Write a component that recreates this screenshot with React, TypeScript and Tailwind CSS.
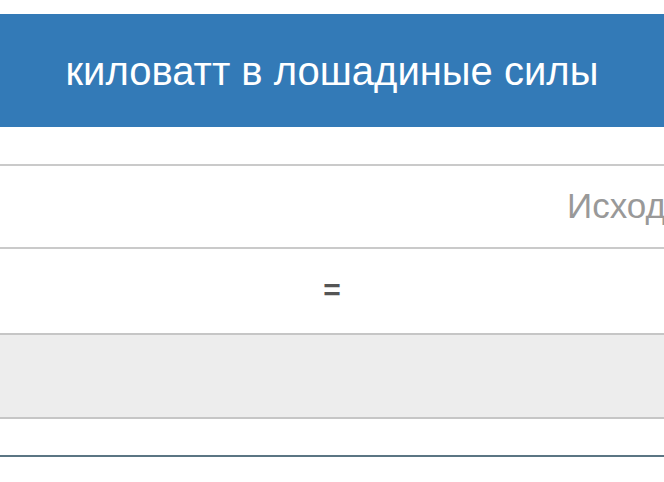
export default function App() {
  return (
    <div className="w-[664px] h-[482px] overflow-hidden bg-white font-['Liberation_Sans',Arial,sans-serif]">
      <div className="h-[14px]" />
      <div className="h-[113px] bg-[#337ab7] flex items-center justify-center">
        <h1 className="text-white text-[40px] leading-none">киловатт в лошадиные силы</h1>
      </div>
      <div className="h-[37px]" />
      <div className="border-t-2 border-[#cacaca] h-[83px] flex items-center overflow-hidden">
        <div className="pl-[567px] text-[35px] text-[#999] whitespace-nowrap">Исходное значение</div>
      </div>
      <div className="border-t-2 border-[#cacaca] h-[86px] flex items-center justify-center">
        <span className="text-[30px] font-bold text-[#555] leading-none pb-[2px]">=</span>
      </div>
      <div className="border-t-2 border-[#c6c6c6] h-[84px] bg-[#ededed]" />
      <div className="border-t-2 border-[#c6c6c6] h-[38px]" />
      <div className="border-t-2 border-[#5b7583]" />
    </div>
  )
}
